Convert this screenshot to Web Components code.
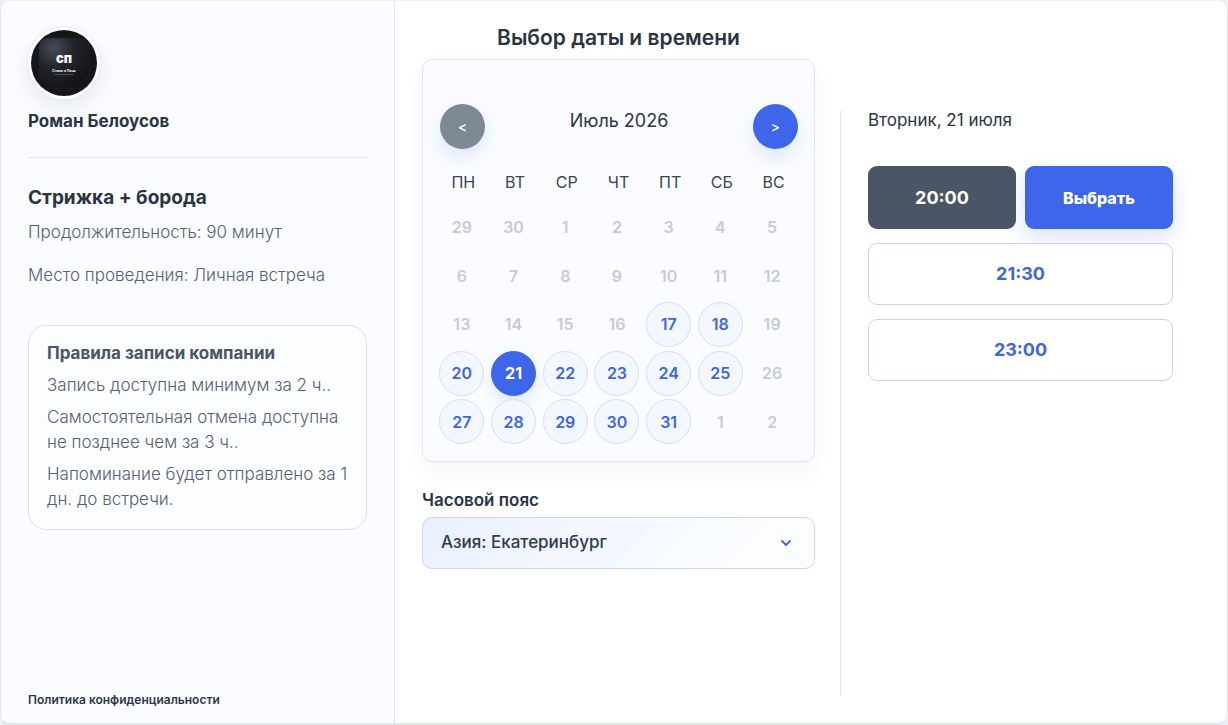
<!DOCTYPE html>
<html lang="ru">
<head>
<meta charset="utf-8">
<meta name="viewport" content="width=device-width, initial-scale=1">
<title>Выбор даты и времени</title>
<style>
  html { height: 100%; }
  body {
    margin: 0; min-height: 100%; display: flex; background: #eceff6;
    font: 400 17px/24px Inter, "Open Sans", sans-serif; color: #2d3748;
    --blue: #3e66eb; --blue-text: #4066d8; --ink: #2a3444; --muted: #56616f; --line: #e0e5ef;
  }
</style>
</head>
<body>
<booking-page>
  <booking-summary slot="summary"></booking-summary>
  <booking-calendar slot="calendar"></booking-calendar>
  <timezone-picker slot="timezone"></timezone-picker>
  <time-slots slot="times">Вторник, 21 июля</time-slots>
</booking-page>

<template id="booking-page">
  <style>
    :host { flex: 1; display: grid; grid-template-columns: 394fr 832fr; box-sizing: border-box; min-height: 100vh; border: 1px solid var(--line); border-bottom-width: 2px; border-radius: 10px; background: #fff; overflow: hidden; border-top-color: #eef1f6; }
    .side { display: flex; background: linear-gradient(#fafcff, #fbfcff); border-right: 1px solid var(--line); min-width: 0; }
    main { display: grid; grid-template-columns: 393fr 387fr; column-gap: 25px; padding: 21px 0 27px 27px; min-width: 0; }
    h1 { margin: 0 0 5px; font-size: 21px; line-height: 32px; font-weight: 600; text-align: center; color: var(--ink); }
    .pick { min-width: 0; }
    .times { display: flex; padding-top: 89px; min-width: 0; }
  </style>
  <aside class="side"><slot name="summary"></slot></aside>
  <main>
    <section class="pick">
      <h1>Выбор даты и времени</h1>
      <slot name="calendar"></slot>
      <slot name="timezone"></slot>
    </section>
    <div class="times"><slot name="times"></slot></div>
  </main>
</template>

<template id="booking-summary">
  <style>
    :host { flex: 1; display: flex; flex-direction: column; padding: 26px 27px 14px; min-width: 0; }
    .avatar { width: 66px; height: 66px; border: 3px solid #fff; border-radius: 50%; overflow: hidden; box-shadow: 0 0 0 1px #e6eaf2, 0 8px 20px #1f2a4a18; }
    .avatar svg { display: block; width: 66px; height: 66px; }
    .name { margin-top: 10px; padding-bottom: 24px; border-bottom: 1px solid #dfe6ee; font-weight: 700; color: var(--ink); }
    h2 { margin: 28px 0 10px; font-size: 19px; line-height: 24px; font-weight: 700; color: var(--ink); }
    p { margin: 0; color: var(--muted); font-weight: 300; }
    .place { margin-top: 19px; }
    .rules { margin-top: 38px; padding: 15px 14px 17px 18px; border: 1px solid #dadfe8; border-radius: 18px; background: #fcfdff; line-height: 25px; }
    h3 { margin: 0; font-size: 17px; font-weight: 700; color: #4a5565; }
    .rules p { margin-top: 7px; }
    a { margin-top: auto; align-self: flex-start; font-size: 12px; line-height: 18px; font-weight: 600; color: #2d3748; text-decoration: none; }
  </style>
  <div class="avatar">
    <svg viewBox="0 0 66 66" role="img" aria-label="Логотип">
      <defs>
        <radialGradient id="sheen" cx="0.3" cy="0.2" r="0.8">
          <stop offset="0" stop-color="#484b57"/><stop offset="0.5" stop-color="#22242b"/><stop offset="1" stop-color="#141519"/>
        </radialGradient>
      </defs>
      <rect width="66" height="66" fill="#151619"/>
      <rect x="8" y="8" width="50" height="50" rx="7" fill="url(#sheen)" stroke="#24262b" stroke-width="0.5"/>
      <text x="33" y="33" text-anchor="middle" font-family="Inter, sans-serif" font-weight="900" font-size="13" fill="#fff">сп</text>
      <text x="33" y="42" text-anchor="middle" font-family="Inter, sans-serif" font-weight="700" font-size="3.500" fill="#f3f3f3">Сталь и Пена</text>
      <path d="M24 44.500h18" stroke="#8c8e95" stroke-width="0.600" stroke-dasharray="1.200 0.500"/>
    </svg>
  </div>
  <div class="name">Роман Белоусов</div>
  <h2>Стрижка + борода</h2>
  <p>Продолжительность: 90 минут</p>
  <p class="place">Место проведения: Личная встреча</p>
  <section class="rules">
    <h3>Правила записи компании</h3>
    <p>Запись доступна минимум за 2 ч..</p>
    <p>Самостоятельная отмена доступна не позднее чем за 3 ч..</p>
    <p>Напоминание будет отправлено за 1 дн. до встречи.</p>
  </section>
  <a href="#privacy">Политика конфиденциальности</a>
</template>

<template id="booking-calendar">
  <style>
    :host { display: block; padding: 44px 16px 15px; border: 1px solid #dee5f0; border-radius: 10px; background: #fafcff; box-shadow: 0 10px 24px #0000000a; font-size: 16px; }
    header { display: flex; justify-content: space-between; align-items: flex-start; padding-left: 1px; }
    .month { font-size: 18px; line-height: 34px; color: var(--ink); }
    button { box-sizing: border-box; width: 45px; height: 45px; padding: 0; border: 0; border-radius: 50%; font: inherit; cursor: pointer; }
    .nav { background: var(--blue); color: #fff; font-size: 14px; font-weight: 500; box-shadow: 0 8px 18px #3e66eb26; }
    .nav:disabled { background: #7f8895; cursor: default; }
    table { width: calc(100% + 3px); height: 285px; margin: 12px 0 0 -3px; border-collapse: collapse; table-layout: fixed; }
    th { height: 42px; padding: 0 0 0 3px; font-weight: 400; color: #3b4554; }
    td { padding: 0; text-align: center; }
    td button { display: block; margin: 0 auto; font-weight: 600; background: #f3f7ff; border: 1px solid #d4dff6; color: var(--blue-text); }
    td button:disabled { background: none; border-color: transparent; color: #c9cbce; cursor: default; }
    td button[aria-pressed="true"] { background: var(--blue); border-color: var(--blue); color: #fff; font-weight: 700; box-shadow: 0 6px 14px #3e66eb26; }
  </style>
  <header>
    <button class="nav" disabled aria-label="Предыдущий месяц">&lt;</button>
    <div class="month">Июль 2026</div>
    <button class="nav" aria-label="Следующий месяц">&gt;</button>
  </header>
  <table>
    <thead><tr><th>ПН</th><th>ВТ</th><th>СР</th><th>ЧТ</th><th>ПТ</th><th>СБ</th><th>ВС</th></tr></thead>
    <tbody></tbody>
  </table>
</template>

<template id="timezone-picker">
  <style>
    :host { display: block; margin-top: 26px; }
    label { display: block; line-height: 24px; margin-bottom: 5px; font-weight: 600; color: var(--ink); }
    .field { display: grid; align-items: center; }
    select, svg { grid-area: 1 / 1; }
    select { appearance: none; box-sizing: border-box; width: 100%; height: 52px; margin: 0; padding: 0 44px 2px 18px; border: 1px solid #cbd5e3; border-radius: 10px; background: linear-gradient(135deg, #e9f0ff, #fbfdff 80%); font: inherit; font-weight: 500; color: #2f3b50; }
    svg { justify-self: end; width: 12px; height: 8px; margin-right: 23px; pointer-events: none; }
  </style>
  <label for="zone">Часовой пояс</label>
  <div class="field">
    <select id="zone"><option>Азия: Екатеринбург</option></select>
    <svg viewBox="0 0 12 8" fill="none" stroke="#3e66eb" stroke-width="1.800" stroke-linecap="round" stroke-linejoin="round" aria-hidden="true"><path d="M2 2l4 4 4-4"/></svg>
  </div>
</template>

<template id="time-slots">
  <style>
    :host { flex: 1; display: block; border-left: 1px solid var(--line); padding: 0 54px 0 27px; min-width: 0; }
    h2 { margin: -3px 0 34px; font-size: 17px; line-height: 24px; font-weight: 400; color: var(--ink); }
    .list { display: grid; gap: 14px; }
    .chosen { display: grid; grid-template-columns: 1fr 1fr; gap: 9px; }
    button { box-sizing: border-box; width: 100%; height: 62px; padding: 0; border: 1px solid #c4d3f2; border-radius: 9px; background: #fff; font: inherit; font-size: 18px; font-weight: 700; color: var(--blue-text); cursor: pointer; }
    .chosen button { height: 63px; border: 0; color: #fff; background: #4a5666; }
    .chosen .confirm { background: var(--blue); font-size: 16px; font-weight: 800; box-shadow: 0 8px 20px #3e66eb30; }
  </style>
  <h2><slot></slot></h2>
  <div class="list">
    <div class="chosen"><button>20:00</button><button class="confirm">Выбрать</button></div>
    <button>21:30</button>
    <button>23:00</button>
  </div>
</template>

<script>
  class TemplateElement extends HTMLElement {
    constructor() {
      super();
      const template = document.getElementById(this.localName);
      this.attachShadow({ mode: "open" }).append(template.content.cloneNode(true));
    }
  }

  class BookingPage extends TemplateElement {}
  class BookingSummary extends TemplateElement {}
  class TimezonePicker extends TemplateElement {}
  class TimeSlots extends TemplateElement {}

  class BookingCalendar extends TemplateElement {
    connectedCallback() {
      const body = this.shadowRoot.querySelector("tbody");
      const open = new Set([17, 18, 20, 21, 22, 23, 24, 25, 27, 28, 29, 30, 31]);
      body.replaceChildren();
      for (let week = 0; week < 5; week++) {
        const row = body.insertRow();
        for (let day = 0; day < 7; day++) {
          const date = new Date(2026, 5, 29 + week * 7 + day);
          const button = document.createElement("button");
          button.textContent = date.getDate();
          button.disabled = date.getMonth() !== 6 || !open.has(date.getDate());
          if (!button.disabled) button.setAttribute("aria-pressed", date.getDate() === 21);
          row.insertCell().append(button);
        }
      }
    }
  }

  customElements.define("booking-summary", BookingSummary);
  customElements.define("booking-calendar", BookingCalendar);
  customElements.define("timezone-picker", TimezonePicker);
  customElements.define("time-slots", TimeSlots);
  customElements.define("booking-page", BookingPage);
</script>
</body>
</html>
